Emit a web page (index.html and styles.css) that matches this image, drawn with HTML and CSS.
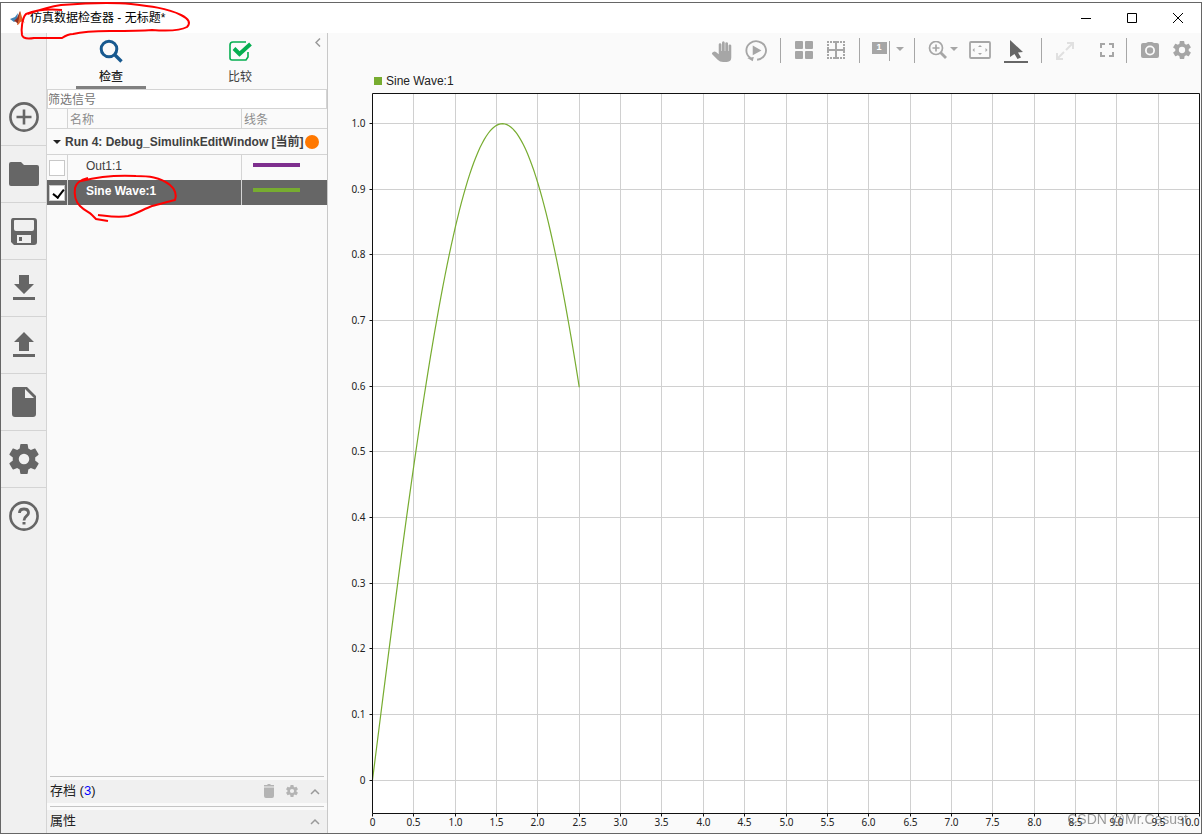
FILE: index.html
```html
<!DOCTYPE html>
<html lang="zh-CN">
<head>
<meta charset="utf-8">
<title>仿真数据检查器 - 无标题*</title>
<link rel="stylesheet" href="styles.css">
</head>
<body>
<svg class="defs" aria-hidden="true">
  <symbol id="gear" viewBox="2 2 20 20"><path d="M19.43 12.98c.04-.32.07-.64.07-.98s-.03-.66-.07-.98l2.11-1.65c.19-.15.24-.42.12-.64l-2-3.46c-.12-.22-.39-.3-.61-.22l-2.49 1c-.52-.4-1.08-.73-1.69-.98l-.38-2.65A.49.49 0 0 0 14 2h-4c-.25 0-.46.18-.49.42l-.38 2.65c-.61.25-1.17.59-1.69.98l-2.49-1c-.23-.09-.49 0-.61.22l-2 3.46c-.13.22-.07.49.12.64l2.11 1.65c-.04.32-.07.65-.07.98s.03.66.07.98l-2.11 1.65c-.19.15-.24.42-.12.64l2 3.46c.12.22.39.3.61.22l2.49-1c.52.4 1.08.73 1.69.98l.38 2.65c.03.24.24.42.49.42h4c.25 0 .46-.18.49-.42l.38-2.65c.61-.25 1.17-.59 1.69-.98l2.49 1c.23.09.49 0 .61-.22l2-3.46c.12-.22.07-.49-.12-.64l-2.11-1.65zM12 15.500a3.500 3.500 0 1 1 0-7 3.500 3.500 0 0 1 0 7z"/></symbol>
</svg>
<div class="window">
  <header class="titlebar">
    <svg class="logo" viewBox="0 0 16 16"><path d="M1 9l5-2 3-4-1 7-3 2z" fill="#3f83b5"/><path d="M5 11l3-3 3-7 1 4-3 9-2-2z" fill="#8f2f22"/><path d="M11 1c1 2 2 8 5 12-3-2-4-2-6 1-1 1-2 1-2 1 2-4 2-9 3-14z" fill="#e0662b"/></svg>
    <h1 class="title">仿真数据检查器 - 无标题*</h1>
    <div class="controls">
      <button aria-label="最小化"><svg viewBox="0 0 10 10"><path d="M0 5.500h10"/></svg></button>
      <button aria-label="最大化"><svg viewBox="0 0 10 10"><path d="M.5.5h9v9h-9z"/></svg></button>
      <button aria-label="关闭"><svg viewBox="0 0 10 10"><path d="M0 0l10 10M10 0L0 10"/></svg></button>
    </div>
  </header>
  <div class="body">
    <nav class="sidebar">
      <button aria-label="新建"><svg viewBox="0 0 30 30"><g fill="none" stroke="currentColor" stroke-width="2.600"><circle cx="15" cy="15" r="13.600"/><path d="M15 7.500v15M7.500 15h15"/></g></svg></button>
      <button aria-label="打开"><svg viewBox="0 0 30 30"><path d="M2 3h10l3 3h13q2 0 2 2v17q0 2-2 2H2q-2 0-2-2V5q0-2 2-2z"/></svg></button>
      <button aria-label="保存"><svg viewBox="0 0 30 30"><path fill-rule="evenodd" d="M4 2h21q3 0 3 3v21q0 3-3 3H5l-3-3V5q0-3 2-3zm2 2q-1 0-1 1v8q0 2 2 2h16q2 0 2-2V5q0-1-1-1zM8 19v8h14v-8zm2 2h3v4h-3z"/></svg></button>
      <button aria-label="导入"><svg viewBox="0 0 30 30"><path d="M10 2h10v9h5L15 21 5 11h5zM4 24h22v3H4z"/></svg></button>
      <button aria-label="导出"><svg viewBox="0 0 30 30"><path d="M15 2l10 10h-5v9H10v-9H5zM4 24h22v3H4z"/></svg></button>
      <button aria-label="报告"><svg viewBox="0 0 30 30"><path fill-rule="evenodd" d="M5 0h13l9 9v18q0 3-3 3H6q-3 0-3-3V3q0-3 2-3zm11 2v9h9z"/></svg></button>
      <button aria-label="设置"><svg><use href="#gear"/></svg></button>
      <button aria-label="帮助"><svg viewBox="0 0 30 30"><g fill="none" stroke="currentColor" stroke-width="2.600"><circle cx="15" cy="15" r="13.600"/><path d="M10.500 12q0-4 4.500-4t4.500 4c0 3-4.500 3-4.500 7.500" stroke-width="2.800"/></g><path d="M13.500 21h3v2.500h-3z"/></svg></button>
    </nav>
    <section class="panel">
      <div class="tabs">
        <button class="tab active"><svg class="line" viewBox="0 0 24 24" stroke="#18598f"><circle cx="10" cy="10" r="7.800" stroke-width="3"/><path d="M15.500 15.500l7 7" stroke-width="3.400"/></svg><span>检查</span></button>
        <button class="tab"><svg class="line" viewBox="0 0 24 24" stroke="#05ae50"><path d="M18 3H5Q2 3 2 6v13q0 2 2 2h14l2-3v-5" stroke-width="1.600"/><path d="M6 9.500l5.500 5.500L22.500 5" stroke-width="4"/></svg><span>比较</span></button>
        <button class="collapse" aria-label="折叠"><svg viewBox="0 0 6 9"><path d="M5 .5l-4 4 4 4"/></svg></button>
      </div>
      <input class="filter" type="text" placeholder="筛选信号" aria-label="筛选信号">
      <table class="signals">
        <colgroup><col class="c-check"><col><col class="c-line"></colgroup>
        <thead><tr><th></th><th>名称</th><th>线条</th></tr></thead>
        <tbody>
          <tr class="run"><td colspan="3"><div><i class="fold"></i><span>Run 4: Debug_SimulinkEditWindow [当前]</span><i class="dot"></i></div></td></tr>
          <tr><td><input type="checkbox" id="out1"></td><td class="name"><label for="out1">Out1:1</label></td><td><i class="swatch purple"></i></td></tr>
          <tr class="selected"><td><input type="checkbox" id="sine" checked></td><td class="name"><label for="sine">Sine Wave:1</label></td><td><i class="swatch green"></i></td></tr>
        </tbody>
      </table>
      <div class="drawer"><div class="drawer-bar"><span>存档 (<a href="#archive">3</a>)</span>
        <button aria-label="删除"><svg viewBox="0 0 12 14"><path d="M1 1h3l1-1h2l1 1h3v1.500H1zM1 3.500h10V12q0 2-2 2H3q-2 0-2-2z"/></svg></button>
        <button aria-label="存档设置"><svg><use href="#gear"/></svg></button>
        <button class="up" aria-label="展开存档"><svg viewBox="0 0 12 14"><path d="M2 10l4-4 4 4"/></svg></button></div></div>
      <div class="drawer"><div class="drawer-bar"><span>属性</span>
        <button class="up" aria-label="展开属性"><svg viewBox="0 0 12 14"><path d="M2 10l4-4 4 4"/></svg></button></div></div>
    </section>
    <main class="main">
      <div class="toolbar">
        <div class="group first">
          <button aria-label="平移"><svg viewBox="0 0 20 22"><path d="M2 12q1-1 2.500 0L7 14V5q0-1 1.200-1T9.500 5v6h.5V3.500Q10 2 11.200 2t1.300 1.500V11h.5V4q0-1 1.200-1t1.300 1v7h.5V6q0-1 1.200-1T18.500 6v11q0 4-4 4H11q-3 0-5-2l-5-5q-1-1 1-2z"/></svg></button>
          <button aria-label="重放"><svg viewBox="0 0 20 22"><path d="M5 17.500A9 8.500 0 1 1 11 19" fill="none" stroke="currentColor" stroke-width="1.700"/><path d="M7 6l8 4.500L7 15zM2 17.500l6-1-1 4z"/></svg></button>
        </div>
        <div class="group">
          <button aria-label="布局"><svg viewBox="0 0 20 20"><path d="M2 0h6q1 0 1 1v6q0 1-1 1H2Q1 8 1 7V1q0-1 1-1zM12 0h6q1 0 1 1v6q0 1-1 1h-6q-1 0-1-1V1q0-1 1-1zM2 10h6q1 0 1 1v6q0 1-1 1H2q-1 0-1-1v-6q0-1 1-1zM12 10h6q1 0 1 1v6q0 1-1 1h-6q-1 0-1-1v-6q0-1 1-1z"/></svg></button>
          <button aria-label="网格"><svg class="line" viewBox="0 1 20 20" stroke="currentColor" stroke-width="2"><path d="M1 2h2m1 0h2m1 0h2m2 0h2m1 0h2m1 0h2M1 18h2m1 0h2m1 0h2m2 0h2m1 0h2m1 0h2M2 4v2m0 1v2m0 2v2m0 1v2M18 4v2m0 1v2m0 2v2m0 1v2"/><path d="M10 1v18M1 10h18"/></svg></button>
        </div>
        <div class="group tight">
          <button class="cursor-count" aria-label="数据游标">1</button>
          <button class="caret" aria-label="游标选项"></button>
        </div>
        <div class="group zoomers">
          <button aria-label="放大"><svg class="line" viewBox="0 0 20 20" stroke="currentColor" stroke-width="1.700"><circle cx="8" cy="7" r="6.500"/><path d="M8 3.500v7M4.500 7h7"/><path d="M12.500 11.500l5.500 5.500" stroke-width="2.800"/></svg></button>
          <button class="caret" aria-label="缩放选项"></button>
          <button class="fit" aria-label="适应视图"><svg viewBox="0 0 22 20"><rect x="1" y="1" width="20" height="16" rx="1" fill="none" stroke="currentColor" stroke-width="1.800"/><path d="M9 6l2-2 2 2zM9 12l2 2 2-2zM5.500 7l-2 2 2 2zM16.500 7l2 2-2 2z"/></svg></button>
          <button class="pointer" aria-label="选择"><svg viewBox="0 0 20 20"><path d="M4 0l13 12-5 .5 3 5-3.500 1.500-3-5L4 17z"/></svg></button>
        </div>
        <div class="group wide">
          <button class="faded" aria-label="展开"><svg class="line" viewBox="0 0 20 20" stroke="currentColor" stroke-width="2"><path d="M12 2h6v6M18 2l-7 7M8 18H2v-6M2 18l7-7"/></svg></button>
          <button aria-label="全屏"><svg class="line" viewBox="0 0 20 20" stroke="currentColor" stroke-width="2"><path d="M4 7V3h4M12 3h4v4M16 11v4h-4M8 15H4v-4"/></svg></button>
        </div>
        <div class="group last">
          <button aria-label="快照"><svg viewBox="0 0 20 20"><path fill-rule="evenodd" d="M3 2h3l2-1h4l2 1h3q2 0 2 2v11q0 2-2 2H3q-2 0-2-2V4q0-2 2-2zm7 2.500a5 5 0 1 0 0 10 5 5 0 0 0 0-10z"/><circle cx="10" cy="9.500" r="3.200"/></svg></button>
          <button aria-label="图形设置"><svg class="cog"><use href="#gear"/></svg></button>
        </div>
      </div>
      <div class="legend"><i></i>Sine Wave:1</div>
      <div class="chart"><svg id="plot" role="img" aria-label="Sine Wave:1"></svg></div>
    </main>
  </div>
</div>
<svg class="marks" viewBox="0 0 230 230" aria-hidden="true"><path d="M62 10C50 9 36 10 26 14c-4 4-5 16-4 21 1 4 6 4 12 3l28 0c3-2 6-4 11-4 12-3 26-3 37-3 15 0 30 0 42-1 14 1 28 1 35-3 4-4 2-8-6-12-14-7-32-9-50-11-20-2-45-1-70 1-14 2-22 5-33 9"/><path d="M88 178c-8 2-12 5-13 10-1 7 1 14 5 18 5 5 9 6 12 9l4 4 12 2M98 215c9 1 20 3 30 1 8-2 16-7 24-10 8-2 15-4 23-6 2-5 0-11-5-15-10-8-22-9-34-9-18-1-39 1-55 5"/></svg>
<div class="watermark">CSDN @Mr.Casust</div>
<script src="chart.js"></script>
</body>
</html>
```
FILE: styles.css
```css
* { box-sizing: border-box; }
body { margin: 0; background: #fff; font: 12px/16px "Liberation Sans", "Noto Sans CJK SC", sans-serif; color: #404040; }
button { border: 0; padding: 0; background: none; color: inherit; font: inherit; display: flex; align-items: center; justify-content: center; }
svg { display: block; fill: currentColor; }
.line { fill: none; }
.defs { position: absolute; width: 0; height: 0; }
.window { margin-top: 2px; height: calc(100vh - 2px); border: 1px solid #666; display: flex; flex-direction: column; }
.titlebar { height: 30px; flex: none; display: flex; align-items: center; padding-left: 8px; background: #fff; color: #000; }
.logo { width: 16px; height: 16px; }
.title { margin: 0 auto 0 5px; font-size: 12px; font-weight: 400; }
.controls { display: flex; }
.controls button { width: 46px; height: 30px; }
.controls svg { width: 10px; height: 10px; fill: none; stroke: #000; overflow: visible; }
.body { flex: 1; min-height: 0; display: flex; background: #fafafa; }

.sidebar { width: 46px; flex: none; padding-top: 56px; background: #f0f0f0; border-right: 1px solid #d4d4d4; color: #666; }
.sidebar button { width: 100%; height: 57px; border-bottom: 1px solid #d4d4d4; }
.sidebar button:last-child { border-color: transparent; }
.sidebar svg { width: 30px; height: 30px; }

.panel { width: 281px; flex: none; display: flex; flex-direction: column; border-right: 1px solid #c8c8c8; }
.tabs { display: flex; height: 56px; padding: 0 29px; gap: 59px; position: relative; }
.tab { width: 70px; flex-direction: column; justify-content: flex-start; gap: 6px; padding-top: 6px; border-bottom: 3px solid transparent; }
.tab.active { border-color: #808080; font-weight: 500; color: #222; }
.tab svg { width: 24px; height: 24px; }
.collapse { position: absolute; top: 4px; right: 4px; width: 10px; height: 10px; }
.collapse svg { width: 6px; height: 9px; fill: none; stroke: #999; stroke-width: 1.5; }
.filter { height: 20px; flex: none; width: 100%; border: 1px solid #d4d4d4; padding: 1px 0 0; background: #fff; font: inherit; }
.filter::placeholder { color: #757575; }
.signals { width: 100%; table-layout: fixed; border-collapse: separate; border-spacing: 0; margin-bottom: auto; }
.c-check { width: 21px; }
.c-line { width: 85px; }
.signals th, .signals td { padding: 0; border-right: 1px solid #d4d4d4; text-align: left; line-height: 16px; }
.signals th:last-child, .signals td:last-child { border-right: 0; }
.signals th { height: 20px; padding: 2px 0 0 2px; font-weight: 400; color: #8c8c8c; border-bottom: 1px solid #d4d4d4; }
.signals td { height: 25px; }
.signals .run td { height: 26px; border-bottom: 1px solid #d4d4d4; }
.run div { display: flex; align-items: center; height: 24px; padding: 0 8px 0 6px; font-weight: 700; white-space: nowrap; }
.run span { margin: 0 auto 0 4px; }
.fold { border: 4px solid transparent; border-top-color: #222; border-bottom: 0; }
.dot { width: 14px; height: 14px; border-radius: 50%; background: #ff7800; flex: none; }
.signals .name { padding: 0 0 3px 18px; }
.signals input { appearance: none; display: block; width: 16px; height: 16px; margin: 0 auto 0 2px; border: 1px solid #c8c8c8; background: #fff; }
.signals input:checked::after { content: ""; display: block; width: 5px; height: 9px; margin: 1px 0 0 5px; border: solid #000; border-width: 0 2px 2px 0; transform: rotate(38deg); }
.selected td { background: #666; color: #fff; font-weight: 700; }
.swatch { display: block; width: 47px; height: 4px; margin: 0 0 5px 11px; }
.purple { background: #7e2f8e; }
.green { background: #77ac30; }
.drawer { padding-top: 3px; }
.drawer::before { content: ""; display: block; height: 1px; margin: 0 3px 3px; background: #c4c4c4; }
.drawer-bar { display: flex; align-items: center; gap: 11px; height: 23px; padding: 0 6px 2px 3px; background: #f0f0f0; color: #222; font-size: 13px; }
.drawer-bar span { margin-right: auto; }
.drawer-bar a { color: #00f; text-decoration: none; }
.drawer-bar button { color: #b4b4b4; }
.drawer-bar svg { width: 12px; height: 14px; }
.up svg { fill: none; stroke: #999; stroke-width: 1.5; }

.main { flex: 1; min-width: 0; display: flex; flex-direction: column; }
.toolbar { display: flex; justify-content: flex-end; height: 37px; flex: none; padding: 5px 9px 0 0; color: #a6a6a6; }
.group { display: flex; align-items: center; gap: 12px; height: 25px; padding: 0 13px; border-left: 1px solid #a6a6a6; }
.group svg { width: 20px; height: 20px; }
.group .cog { width: 18px; height: 18px; margin: 0 1px 2px; }
.group.first { border: 0; }
.group.first svg { width: 22px; height: 24px; }
.tight { gap: 6px; padding-right: 10px; padding-left: 12px; }
.cursor-count { width: 18px; height: 20px; padding: 0 3px 7px 0; border-right: 1px solid #a6a6a6; background: linear-gradient(#a6a6a6, #a6a6a6) 0 1px / 15px 12px no-repeat; color: #fff; font: 700 9px/12px "Liberation Sans", sans-serif; }
.caret { width: 8px; height: 4px; margin-bottom: 4px; border: 4px solid transparent; border-top-color: #a6a6a6; border-bottom: 0; }
.zoomers { gap: 2px; }
.zoomers .fit { margin: 0 11px 0 9px; }
.zoomers .fit svg { width: 22px; }
.pointer { width: 24px; height: 25px; border-bottom: 2px solid #666; color: #666; }
.wide { gap: 22px; padding-right: 9px; }
.faded { color: #e0e0e0; }
.last { padding-right: 0; }
.legend { display: flex; align-items: center; gap: 4px; height: 22px; flex: none; padding-left: 46px; color: #222; }
.legend i { width: 8px; height: 8px; background: #77ac30; }
.chart { flex: 1; min-height: 0; }
.chart svg { width: 100%; height: 100%; font: 10px "Noto Sans", sans-serif; fill: #222; }
.chart .grid { stroke: #d0d0d0; fill: none; }
.chart .axis { stroke: #111; fill: none; }
.chart .curve { stroke: #77ac30; stroke-width: 1.2; fill: none; }
.marks { position: absolute; left: 0; top: 0; width: 230px; height: 230px; fill: none; stroke: #f00; stroke-width: 2; pointer-events: none; }
.watermark { position: fixed; right: 14px; bottom: 6px; font-size: 14px; line-height: 18px; color: rgba(90, 90, 90, .6); pointer-events: none; }
```
FILE: chart.js
```js
const plot = document.getElementById("plot");

function draw() {
  const w = plot.clientWidth, h = plot.clientHeight;
  const left = 44.5, top = 1.5, right = w - 1.5, bottom = h - 19.5;
  const yMin = -0.051, yMax = 1.046;
  const x = v => left + v / 10 * (right - left);
  const y = v => bottom - (v - yMin) / (yMax - yMin) * (bottom - top);
  const snap = v => Math.floor(v) + 0.5;
  let grid = "", ticks = "", labels = "", curve = "";
  for (let i = 0; i <= 20; i++) {
    const px = snap(x(i / 2));
    if (i > 0 && i < 20) grid += `M${px} ${top}V${bottom}`;
    ticks += `M${px} ${bottom}v3`;
    const anchor = i === 20 ? "end" : "middle";
    labels += `<text x="${px}" y="${bottom + 12}" text-anchor="${anchor}">${i ? (i / 2).toFixed(1) : 0}</text>`;
  }
  for (let i = 0; i <= 10; i++) {
    const py = snap(y(i / 10));
    grid += `M${left} ${py}H${right}`;
    ticks += `M${left} ${py}h-3`;
    labels += `<text x="${left - 7}" y="${py + 3}" text-anchor="end">${i ? (i / 10).toFixed(1) : 0}</text>`;
  }
  for (let t = 0; t <= 100; t++) {
    const v = t / 40;
    curve += `${t ? "L" : "M"}${x(v)} ${y(Math.sin(v))}`;
  }
  plot.innerHTML = `<rect x="${left}" y="${top}" width="${right - left}" height="${bottom - top}" fill="#fff"/>` +
    `<path class="grid" d="${grid}"/><path class="curve" d="${curve}"/>` +
    `<path class="axis" d="M${left} ${top}H${right}V${bottom}H${left}Z${ticks}"/>${labels}`;
}

draw();
window.addEventListener("resize", draw);
```
